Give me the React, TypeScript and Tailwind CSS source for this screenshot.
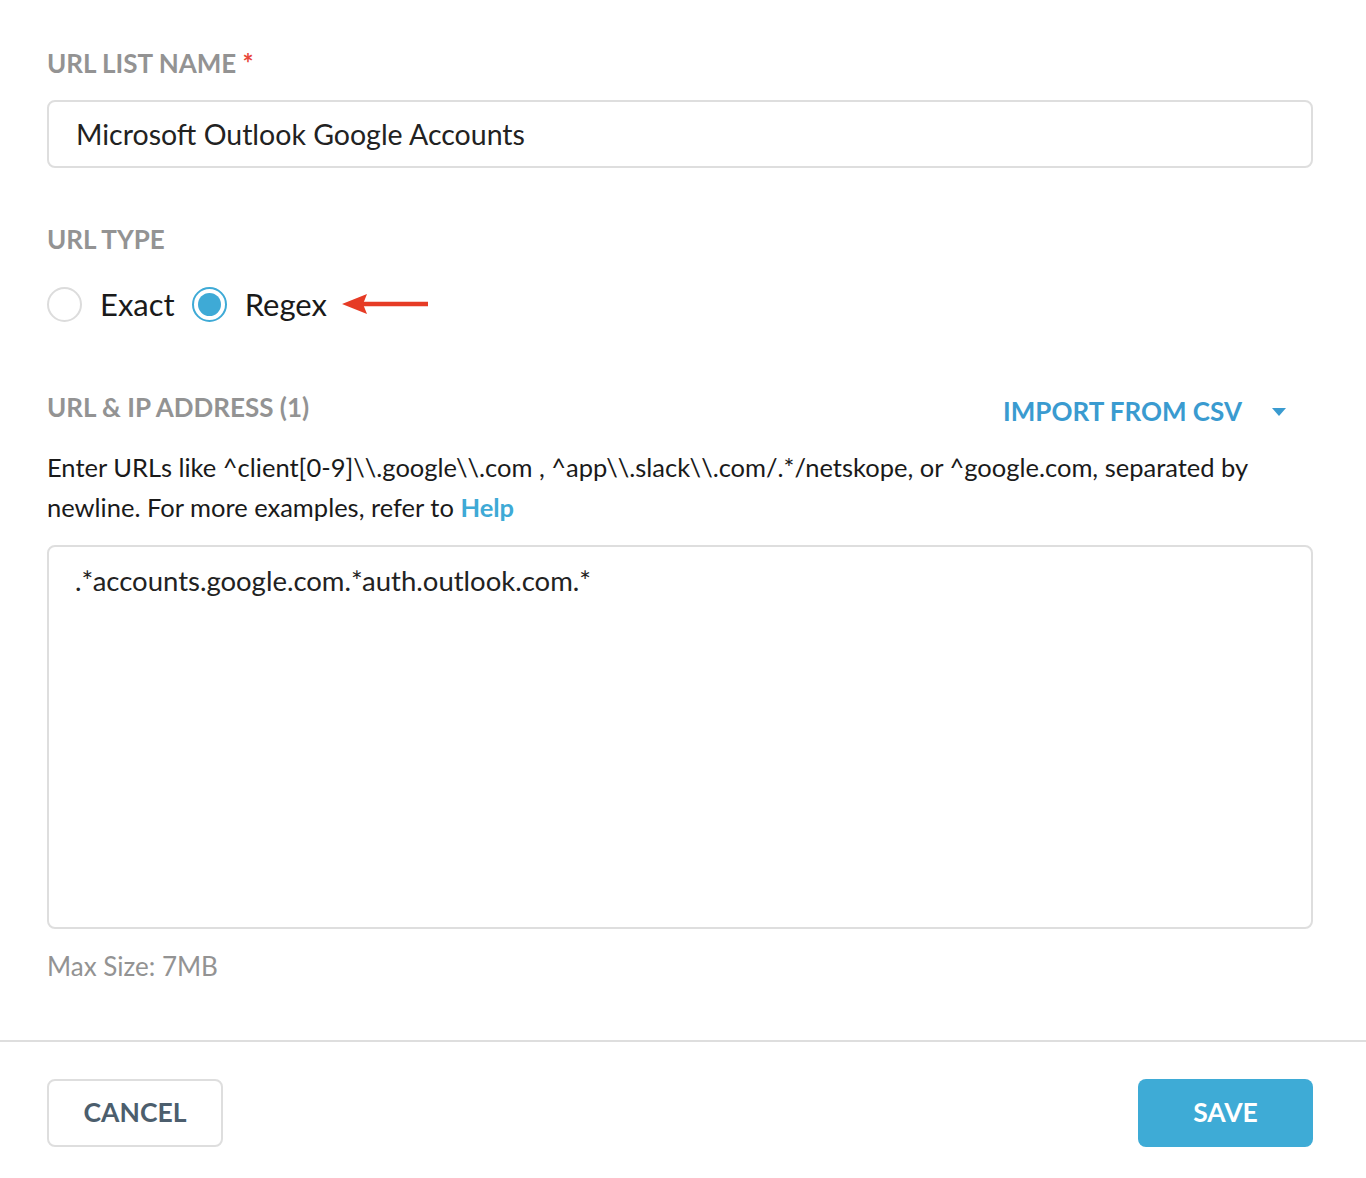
import { useState } from "react";

const FONT = { fontFamily: "Lato, 'Open Sans', sans-serif" };

function Radio({ checked, label, onClick }: { checked: boolean; label: string; onClick: () => void }) {
  return (
    <button type="button" onClick={onClick} className="flex items-center gap-[18px]">
      {checked ? (
        <span className="flex h-[35px] w-[35px] items-center justify-center rounded-full border-2 border-[#3eaad6] bg-white">
          <span className="h-[23px] w-[23px] rounded-full bg-[#3eaad6]" />
        </span>
      ) : (
        <span className="h-[35px] w-[35px] rounded-full border-2 border-[#dcdcdc] bg-white" />
      )}
      <span className="text-[31px] leading-[40px] text-[#1a1a1a]">{label}</span>
    </button>
  );
}

export default function App() {
  const [type, setType] = useState<"exact" | "regex">("regex");

  return (
    <div style={FONT} className="min-h-[1178px] w-full bg-white">
      <div className="pl-[47px] pr-[53px] pt-[47px] pb-[56px]">
        {/* List name */}
        <label className="block text-[26px] font-bold leading-[32px] text-[#939393]">
          URL LIST NAME <span className="text-[#e8473a]">*</span>
        </label>
        <div className="mt-[21px] flex h-[68px] items-center rounded-lg border-2 border-[#dedede] px-[27px]">
          <span className="text-[28.5px] text-[#222]">Microsoft Outlook Google Accounts</span>
        </div>

        {/* URL type */}
        <div className="mt-[55px] text-[26px] font-bold leading-[32px] text-[#939393]">URL TYPE</div>
        <div className="mt-[29px] flex items-center gap-[17px]">
          <Radio checked={type === "exact"} label="Exact" onClick={() => setType("exact")} />
          <Radio checked={type === "regex"} label="Regex" onClick={() => setType("regex")} />
          <svg width="88" height="22" viewBox="0 0 88 22" className="ml-[-2px]">
            <path d="M20 11 H86" stroke="#e63b25" strokeWidth="4.5" />
            <path d="M0 11 L25 1 L21 11 L25 21 Z" fill="#e63b25" />
          </svg>
        </div>

        {/* URL list */}
        <div className="mt-[59px] flex items-center justify-between">
          <span className="text-[26px] font-bold leading-[32px] text-[#939393]">URL &amp; IP ADDRESS (1)</span>
          <button type="button" className="mt-[9px] flex items-center gap-[30px] pr-[27px] text-[26px] font-bold text-[#3a9bd0]">
            IMPORT FROM CSV
            <svg width="14" height="8" viewBox="0 0 14 8">
              <path d="M0 0 H14 L7 8 Z" fill="#3a9bd0" />
            </svg>
          </button>
        </div>
        <p className="mt-[16px] text-[25.5px] leading-[40px] text-[#1a1a1a]">
          Enter URLs like ^client[0-9]\\.google\\.com , ^app\\.slack\\.com/.*/netskope, or ^google.com, separated by
          newline. For more examples, refer to <a className="font-bold text-[#3eaad6]">Help</a>
        </p>
        <div className="mt-[18px] h-[384px] rounded-lg border-2 border-[#dedede] px-[26px] pt-[16px]">
          <span className="text-[27.5px] leading-[36px] text-[#222]">.*accounts.google.com.*auth.outlook.com.*</span>
        </div>
        <div className="mt-[19px] text-[26px] leading-[36px] text-[#939393]">Max Size: 7MB</div>
      </div>

      <div className="border-t-2 border-[#dedede]" />

      <div className="flex items-center justify-between pl-[47px] pr-[53px] pt-[37px] pb-[30px]">
        <button
          type="button"
          className="h-[68px] w-[176px] rounded-lg border-2 border-[#dedede] bg-white text-[26.5px] font-bold text-[#4c5e6d]"
        >
          CANCEL
        </button>
        <button type="button" className="h-[68px] w-[175px] rounded-lg bg-[#3eabd6] text-[26.5px] font-bold text-white">
          SAVE
        </button>
      </div>
    </div>
  );
}
